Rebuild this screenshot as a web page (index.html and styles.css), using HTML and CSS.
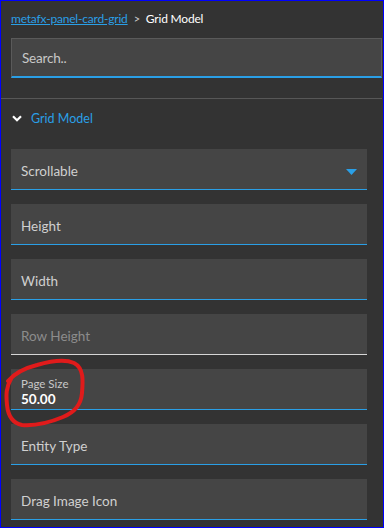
FILE: index.html
```html
<!DOCTYPE html>
<html lang="en">
<head>
    <meta charset="UTF-8">
    <meta name="viewport" content="width=device-width, initial-scale=1.0">
    <title>Grid Model</title>
    <link rel="stylesheet" href="styles.css">
</head>
<body>
    <div class="panel">
        <div class="breadcrumb">
            <a href="#">metafx-panel-card-grid</a>
            <span class="sep">&gt;</span>
            <span class="current">Grid Model</span>
        </div>

        <div class="search">Search..</div>

        <div class="section-head">
            <svg class="chevron" width="10" height="7" viewBox="0 0 10 7">
                <path d="M1 1.2 L5 5.2 L9 1.2" fill="none" stroke="#fff" stroke-width="2.2"/>
            </svg>
            <span>Grid Model</span>
        </div>

        <div class="fields">
            <div class="field select">
                <span class="label">Scrollable</span>
                <svg class="arrow" width="11" height="6" viewBox="0 0 11 6">
                    <path d="M0 0 H11 L5.5 6 Z" fill="#2a9fe6"/>
                </svg>
            </div>
            <div class="field"><span class="label">Height</span></div>
            <div class="field"><span class="label">Width</span></div>
            <div class="field empty"><span class="label">Row Height</span></div>
            <div class="field filled">
                <span class="small-label">Page Size</span>
                <span class="value">50.00</span>
            </div>
            <div class="field"><span class="label">Entity Type</span></div>
            <div class="field"><span class="label">Drag Image Icon</span></div>
        </div>

        <!-- hand-drawn red mark from the screenshot -->
        <svg class="scribble" width="90" height="72" viewBox="0 0 90 72">
            <path d="M7 24 C14 16 24 11 36 8 C50 4 64 2 73 6 C83 11 82 24 81 36 C80 48 74 55 62 60 C50 65 34 69 21 68 C11 66 7 58 6 48 C5 38 5 30 10 22"
                  fill="none" stroke="#e01b1b" stroke-width="4" stroke-linecap="round"/>
        </svg>
    </div>
</body>
</html>
```

FILE: styles.css
```css
html, body {
    margin: 0;
    padding: 0;
}
body {
    font-family: Lato, "Open Sans", sans-serif;
    background-color: #333333;
}
.panel {
    position: relative;
    width: 384px;
    height: 528px;
    box-sizing: border-box;
    border: 1px solid #0000ff;
    background-color: #333333;
    overflow: hidden;
}
.breadcrumb {
    display: flex;
    align-items: center;
    height: 34px;
    padding-left: 10px;
    font-size: 12px;
    letter-spacing: -0.2px;
}
.breadcrumb a {
    color: #2a9fe6;
}
.breadcrumb .sep {
    color: #cccccc;
    margin: 0 6px;
    font-size: 11px;
}
.breadcrumb .current {
    color: #ffffff;
}
.search {
    margin: 3px 1px 0 10px;
    height: 40px;
    box-sizing: border-box;
    display: flex;
    align-items: center;
    padding-left: 10px;
    background-color: #454545;
    border: 1px solid #5a5a5a;
    border-bottom: 2px solid #2a9fe6;
    color: #c8c8c8;
    font-size: 13.5px;
    letter-spacing: -0.2px;
}
.section-head {
    margin: 20px 1px 0 0;
    border-top: 1px solid #575757;
    display: flex;
    align-items: center;
    height: 39px;
    padding-left: 11px;
    color: #2a9fe6;
    font-size: 12.5px;
}
.chevron {
    margin-right: 9px;
}
.fields {
    display: flex;
    flex-direction: column;
    gap: 14px;
    padding: 11px 16px 0 10px;
}
.field {
    position: relative;
    height: 41px;
    box-sizing: border-box;
    display: flex;
    align-items: center;
    padding: 3px 0 0 10px;
    background-color: #454545;
    border-bottom: 1px solid #2a9fe6;
    color: #d0d0d0;
    font-size: 13.5px;
}
.field.empty {
    border-bottom-color: #d6d6d6;
    color: #8c8c8c;
}
.field.filled {
    flex-direction: column;
    align-items: flex-start;
    justify-content: center;
    padding-top: 5px;
}
.small-label {
    font-size: 11.5px;
    color: #c8c8c8;
    line-height: 15px;
}
.value {
    font-size: 13.5px;
    font-weight: bold;
    color: #ffffff;
    line-height: 17px;
}
.arrow {
    position: absolute;
    right: 10px;
    top: 20px;
}
.scribble {
    position: absolute;
    left: 0;
    top: 356px;
}
```
